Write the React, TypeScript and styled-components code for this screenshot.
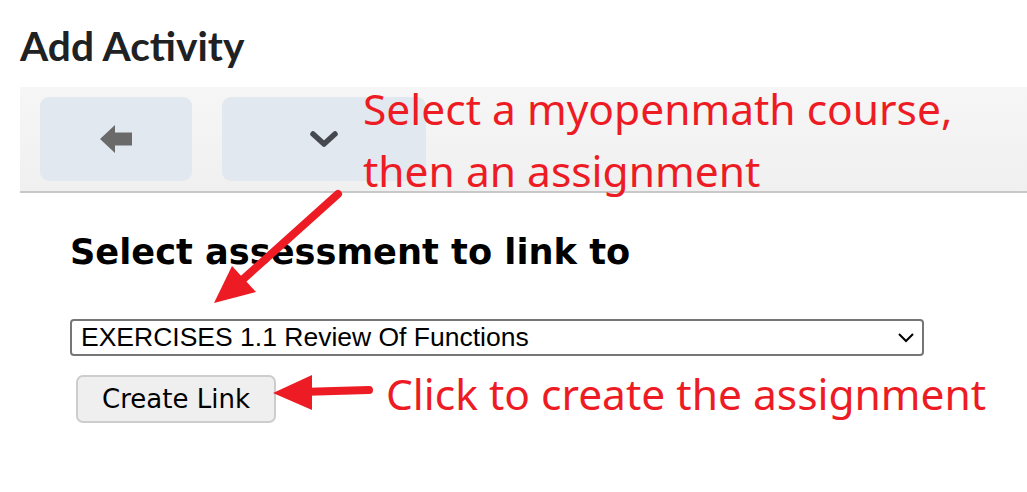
import React from "react";
import styled, { createGlobalStyle } from "styled-components";

const Global = createGlobalStyle`
  html, body { margin: 0; padding: 0; background: #fff; }
  body { width: 1027px; height: 492px; overflow: hidden; }
`;

const Page = styled.div`
  position: relative;
  width: 1027px;
  height: 492px;
  padding-left: 20px;
  box-sizing: border-box;
`;

const Title = styled.h1`
  margin: 0;
  padding-top: 22px;
  height: 87px;
  box-sizing: border-box;
  font-family: Lato, "Liberation Sans", sans-serif;
  font-weight: 700;
  font-size: 40.7px;
  line-height: 48px;
  color: #202122;
`;

const Toolbar = styled.div`
  display: flex;
  gap: 30px;
  height: 106px;
  padding: 10px 20px;
  box-sizing: border-box;
  background: linear-gradient(#f6f6f6, #f0f0f0);
  border-bottom: 2px solid #c8c8c8;
`;

const ToolButton = styled.div<{ $w: number }>`
  width: ${(p) => p.$w}px;
  height: 84px;
  border-radius: 9px;
  background: #e2e8f0;
  display: flex;
  align-items: center;
  justify-content: center;
`;

const Content = styled.div`
  padding: 38px 0 0 50px;
`;

const Heading = styled.h2`
  margin: 0;
  font-family: "DejaVu Sans", sans-serif;
  font-weight: 700;
  font-size: 35.2px;
  line-height: 42px;
  color: #000;
`;

const Select = styled.div`
  margin-top: 46px;
  width: 854px;
  height: 37px;
  box-sizing: border-box;
  border: 2px solid #767676;
  border-radius: 4px;
  display: flex;
  align-items: center;
  justify-content: space-between;
  padding: 0 8px 0 9px;
  font-family: "Liberation Sans", Arial, sans-serif;
  font-size: 26.5px;
  color: #000;
`;

const Button = styled.div`
  margin: 19px 0 0 6px;
  width: 200px;
  height: 48px;
  box-sizing: border-box;
  border: 2px solid #cdcdcd;
  border-radius: 7px;
  background: #efefef;
  display: flex;
  align-items: center;
  justify-content: center;
  font-family: "DejaVu Sans", sans-serif;
  font-size: 26px;
  color: #000;
`;

const Note = styled.div<{ $x: number; $y: number }>`
  position: absolute;
  left: ${(p) => p.$x}px;
  top: ${(p) => p.$y}px;
  font-family: "Noto Sans", "Open Sans", sans-serif;
  font-size: 42.5px;
  line-height: 62px;
  color: #ed1c24;
  white-space: nowrap;
`;

const Overlay = styled.svg`
  position: absolute;
  left: 0;
  top: 0;
  pointer-events: none;
`;

export default function App() {
  return (
    <>
      <Global />
      <Page>
        <Title>Add Activity</Title>
        <Toolbar>
          <ToolButton $w={152}>
            <svg width="32" height="28" viewBox="0 0 32 28">
              <path d="M0 14 L15 0 L15 7.5 L32 7.5 L32 20.5 L15 20.5 L15 28 Z" fill="#6a6a6a" />
            </svg>
          </ToolButton>
          <ToolButton $w={204}>
            <svg width="30" height="18" viewBox="0 0 30 18">
              <path d="M4 4 L15 14 L26 4" fill="none" stroke="#45494f" strokeWidth="5.5" strokeLinecap="round" strokeLinejoin="round" />
            </svg>
          </ToolButton>
        </Toolbar>
        <Content>
          <Heading>Select assessment to link to</Heading>
          <Select>
            <span>EXERCISES 1.1 Review Of Functions</span>
            <svg width="16" height="10" viewBox="0 0 16 10">
              <path d="M1 1 L8 8 L15 1" fill="none" stroke="#000" strokeWidth="2" />
            </svg>
          </Select>
          <Button>Create Link</Button>
        </Content>
        <Note $x={363} $y={78}>
          Select a myopenmath course,
          <br />
          then an assignment
        </Note>
        <Note $x={386} $y={363}>Click to create the assignment</Note>
        <Overlay width="1027" height="492" viewBox="0 0 1027 492">
          <line x1="338" y1="194" x2="240" y2="282" stroke="#ed1c24" strokeWidth="8" strokeLinecap="round" />
          <path d="M214 303 L232 266 L256 292 Z" fill="#ed1c24" />
          <line x1="369" y1="390" x2="300" y2="392" stroke="#ed1c24" strokeWidth="8" strokeLinecap="round" />
          <path d="M273 393 L312 375 L312 410 Z" fill="#ed1c24" />
        </Overlay>
      </Page>
    </>
  );
}
